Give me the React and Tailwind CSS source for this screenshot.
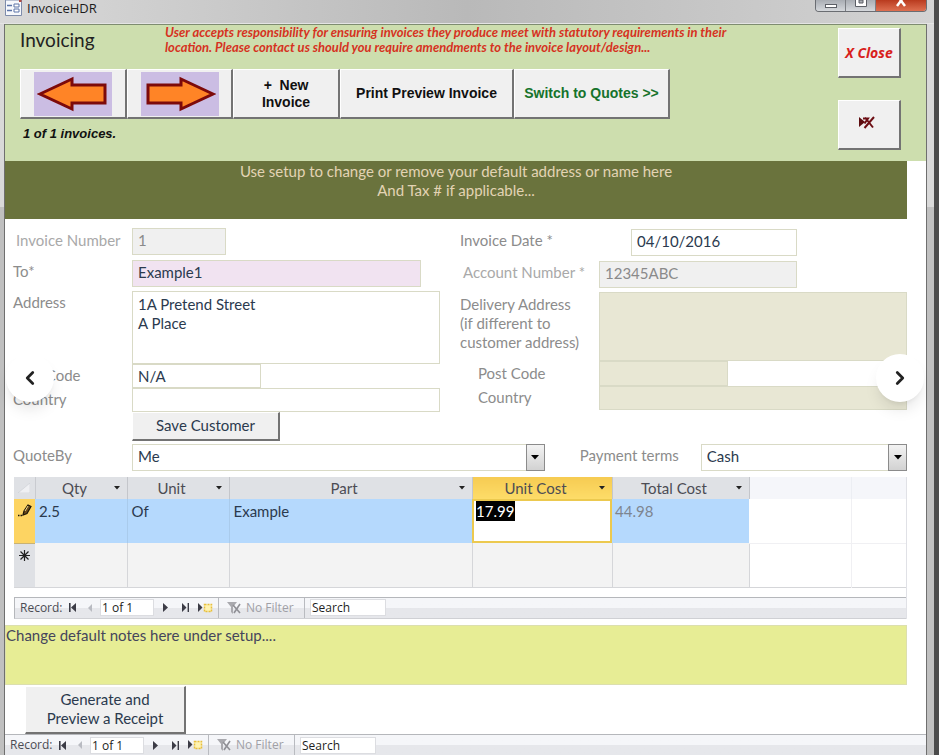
import { useState } from 'react';
import { ChevronLeft, ChevronRight } from 'lucide-react';

const COLUMNS = [
  { key: 'qty', label: 'Qty' },
  { key: 'unit', label: 'Unit' },
  { key: 'part', label: 'Part' },
  { key: 'cost', label: 'Unit Cost', active: true },
  { key: 'total', label: 'Total Cost' },
];

const FIELD = 'block border border-[#d9dac6] px-[5px] text-[#2b3a4e] outline-none';
const TEXTBOX = `${FIELD} pb-[3px]`;
const RAISED = 'bg-[#f0f0f0] border-t border-l border-white border-b-2 border-r-2 border-b-[#737373] border-r-[#737373]';

function Row({ id, label, className = '', labelClass = '', children }) {
  return (
    <div className={`flex ${className}`}>
      <label htmlFor={id} className={`shrink-0 text-[#8c8c8c] ${labelClass}`}>{label}</label>
      {children}
    </div>
  );
}

function Combo({ id, value, className = '' }) {
  return (
    <div className={`relative h-[27px] ${className}`}>
      <select id={id} defaultValue={value} className={`${TEXTBOX} h-full w-full appearance-none bg-white`}>
        <option>{value}</option>
      </select>
      <span className="pointer-events-none absolute inset-y-0 right-0 flex w-[19px] items-center justify-center border border-[#8b8b8b] bg-linear-to-b from-[#f3f3f3] to-[#d2d2d2]">
        <svg width="8" height="5" viewBox="0 0 8 5"><path d="M0 0h8L4 4.5z" /></svg>
      </span>
    </div>
  );
}

function ArrowImage({ flip }) {
  return (
    <span className="flex h-11 w-[78px] items-center justify-center bg-[#cbbde3]">
      <svg width="72" height="38" viewBox="0 0 72 38" className={flip ? '-scale-x-100' : ''}>
        <path d="M3 19 35 4v6h33v18H35v6z" fill="#ff8426" stroke="#7d0a0a" strokeWidth="3" />
      </svg>
    </span>
  );
}

function RecordNav({ id, className = '' }) {
  return (
    <div className={`flex h-[22px] items-center border-t border-[#b5b7bb] bg-linear-to-b from-[#f5f6f9] from-50% to-[#e6e7eb] to-50% font-['Open_Sans',sans-serif] text-[12px] leading-4 text-[#4c4c54] ${className}`}>
      <span className="w-12">Record:</span>
      <button aria-label="First record" className="w-5">
        <svg width="9" height="9" viewBox="0 0 9 9" fill="#3c3c46"><path d="M1 0h1.6v9H1zM8 0v9L3 4.5z" /></svg>
      </button>
      <button aria-label="Previous record" className="w-3">
        <svg width="5" height="8" viewBox="0 0 5 8" fill="#b9bbc2"><path d="M4 0v8L0 4z" /></svg>
      </button>
      <input id={`${id}-pos`} aria-label="Current record" defaultValue="1 of 1" className="h-[17px] w-[54px] border border-[#dcdde1] bg-white px-px text-[#1e1e22] outline-none" />
      <button aria-label="Next record" className="ml-[9px] w-[19px]">
        <svg width="6" height="9" viewBox="0 0 6 9" fill="#3c3c46"><path d="M0 0v9l5-4.5z" /></svg>
      </button>
      <button aria-label="Last record" className="w-4">
        <svg width="9" height="9" viewBox="0 0 9 9" fill="#3c3c46"><path d="M0 0v9l4.5-4.5zM5.6 0h1.4v9H5.6z" /></svg>
      </button>
      <button aria-label="New record" className="w-4">
        <svg width="15" height="10" viewBox="0 0 15 10">
          <path d="M0 0v9l4.500-4.500z" fill="#3c3c46" />
          <path d="M6.500 1.500h7v7h-7z" fill="#fff3b0" stroke="#e8bf3c" strokeWidth="1.500" strokeDasharray="2 1" />
        </svg>
      </button>
      <button className="ml-1 flex h-full w-[87px] items-center gap-1 border-x border-[#b9bbc0] pl-2 text-[#a0a0a6]">
        <svg width="15" height="14" viewBox="0 0 15 14">
          <path d="M0 1h10L6 6v7L4 11V6z" fill="#a9a9ae" />
          <path d="m6 4 7 8M13 3 7 12" stroke="#8f8f95" strokeWidth="1.600" />
        </svg>
        No Filter
      </button>
      <input id={`${id}-search`} aria-label="Search" defaultValue="Search" className="ml-[5px] h-[17px] w-[76px] border border-[#dcdde1] bg-white px-px text-[#1e1e22] outline-none" />
    </div>
  );
}

function TitleBar() {
  return (
    <div className="flex h-6 items-start justify-between border-b border-[#e4e4e4] bg-linear-to-r from-[#d9d9d9] via-[#b9b9b9] to-[#d3d3d3] pr-[7px] pl-[5px] font-['Open_Sans',sans-serif] text-[13px] text-[#1c1c1c]">
      <div className="flex items-center gap-[5px]">
        <svg width="17" height="16" viewBox="0 0 17 16">
          <path d="M.5 0h16v15.500H.5z" fill="#f6f8fc" stroke="#7e8cab" />
          <path d="M14 0h2.500v2H14z" fill="#b3493f" />
          <path d="M2 5.500h5M2 10.500h5" stroke="#5c74a8" strokeWidth="1.500" />
          <path d="M9 4h5v3H9zM9 9h5v3H9z" fill="#fff" stroke="#5c74a8" />
        </svg>
        <span className="leading-4">InvoiceHDR</span>
      </div>
      <div className="flex h-3 overflow-hidden rounded-b-[4px] border border-t-0 border-[#6a6d72]">
        <button aria-label="Minimise" className="flex w-[30px] items-center justify-center border-r border-[#7c7f84] bg-linear-to-b from-[#a9adb3] to-[#d5d8dc]">
          <span className="h-1 w-3 border border-[#5c5f66] bg-white" />
        </button>
        <button aria-label="Maximise" className="flex w-[30px] items-start justify-center border-r border-[#7c7f84] bg-linear-to-b from-[#a9adb3] to-[#d5d8dc]">
          <svg width="12" height="8" viewBox="0 0 12 8">
            <path d="M.5-1v7.500h11V-1" fill="#fff" stroke="#5c5f66" />
            <path d="M4 0h4v3H4z" fill="#a9adb3" stroke="#5c5f66" />
          </svg>
        </button>
        <button aria-label="Close window" className="flex w-[50px] items-start justify-center bg-linear-to-b from-[#b93a1e] to-[#de6f50]">
          <svg width="14" height="8" viewBox="0 0 14 8"><path d="m3 6 6-8M11 6 5-2" stroke="#fff" strokeWidth="2.500" /></svg>
        </button>
      </div>
    </div>
  );
}

function Header() {
  return (
    <header className="flex h-[137px] border-t border-[#7e8c70] bg-[#cddeae]">
      <div className="min-w-0 flex-1 pl-[15px]">
        <div className="flex h-[44px]">
          <h1 className="w-[145px] shrink-0 text-[19px] leading-[30px] text-[#222]">Invoicing</h1>
          <p className="max-w-[580px] text-[13px] leading-[15px] font-bold text-[#d6321f] italic">
            User accepts responsibility for ensuring invoices they produce meet with statutory requirements in their location. Please contact us should you require amendments to the invoice layout/design...
          </p>
        </div>
        <div className="flex h-[50px] font-['Liberation_Sans',sans-serif] text-[14px] leading-[17px] font-bold text-[#111]">
          <button aria-label="Previous invoice" className={`flex w-[107px] items-center justify-center ${RAISED}`}><ArrowImage /></button>
          <button aria-label="Next invoice" className={`flex w-[106px] items-center justify-center ${RAISED}`}><ArrowImage flip /></button>
          <button className={`w-[107px] whitespace-pre ${RAISED}`}>{'+  New\nInvoice'}</button>
          <button className={`w-[174px] ${RAISED}`}>Print Preview Invoice</button>
          <button className={`w-[156px] text-[#15732b] ${RAISED}`}>Switch to Quotes &gt;&gt;</button>
        </div>
        <p className="pt-[7px] pl-[3px] font-['Liberation_Sans',sans-serif] text-[13px] leading-4 font-bold text-[#111] italic">1 of 1 invoices.</p>
      </div>
      <div className="mr-[25px] flex w-[63px] flex-col gap-[22px] pt-[3px]">
        <button className={`h-[50px] font-['Open_Sans',sans-serif] text-[14px] font-bold text-[#d8201c] italic ${RAISED}`}>X Close</button>
        <button aria-label="Delete invoice" className={`flex h-[50px] items-center justify-center pr-1 pb-1 ${RAISED}`}>
          <svg width="16" height="13" viewBox="0 0 16 13">
            <path d="M0 1v10l6-5z" fill="#5d0d10" />
            <path d="M4 2.500h5L5.500 7.500M6 1.500l8 10M15 1 5.500 12" fill="none" stroke="#6d0e14" strokeWidth="2" />
          </svg>
        </button>
      </div>
    </header>
  );
}

function CustomerForm() {
  return (
    <div className="grid grid-cols-[435fr_447fr] gap-x-5">
      <div className="flex flex-col pt-[9px]">
        <Row id="number" label="Invoice Number" className="mb-[5px]" labelClass="w-[127px] pl-[11px] pt-[3px] text-[#a9a9a9]!">
          <input id="number" defaultValue="1" className={`${TEXTBOX} h-[27px] w-[94px] bg-[#f0f0f0] text-[#8a8a8a]!`} />
        </Row>
        <Row id="to" label="To*" className="mb-1" labelClass="w-[127px] pl-2 pt-[2px]">
          <input id="to" defaultValue="Example1" className={`${TEXTBOX} h-[27px] w-[289px] bg-[#f1e3f1]`} />
        </Row>
        <Row id="address" label="Address" labelClass="w-[127px] pl-2 pt-[2px]">
          <textarea id="address" defaultValue={'1A Pretend Street\nA Place'} className={`${FIELD} h-[73px] min-w-0 flex-1 resize-none bg-white pt-[3px]`} />
        </Row>
        <Row id="postcode" label="Post Code" labelClass="w-[127px] pl-2 pt-[2px]">
          <input id="postcode" defaultValue="N/A" className={`${FIELD} h-6 w-[129px] bg-white`} />
        </Row>
        <Row id="country" label="Country" labelClass="w-[127px] pl-2 pt-[2px]">
          <input id="country" className={`${FIELD} h-6 min-w-0 flex-1 bg-white`} />
        </Row>
        <button className={`ml-[127px] h-[29px] w-[148px] pb-[2px] text-[#2b3a4e] ${RAISED}`}>Save Customer</button>
      </div>

      <div className="flex flex-col pt-[10px]">
        <Row id="date" label="Invoice Date *" className="mb-[5px]" labelClass="w-[171px] pt-[2px]">
          <input id="date" defaultValue="04/10/2016" className={`${TEXTBOX} h-[27px] w-[166px] bg-white`} />
        </Row>
        <Row id="account" label="Account Number *" className="mb-1" labelClass="w-[139px] pl-[3px] pt-[2px] text-[#a9a9a9]!">
          <input id="account" defaultValue="12345ABC" className={`${TEXTBOX} h-[27px] w-[198px] bg-[#f0f0f0] text-[#8a8a8a]!`} />
        </Row>
        <Row id="delivery" label="Delivery Address (if different to customer address)" labelClass="w-[139px] h-[69px] pr-3 pt-[3px]">
          <textarea id="delivery" className={`${FIELD} h-[69px] min-w-0 flex-1 resize-none bg-[#e8e7d4]`} />
        </Row>
        <Row id="delivery-postcode" label="Post Code" labelClass="w-[139px] pl-[18px] pt-[3px]">
          <input id="delivery-postcode" className={`${FIELD} h-[25px] w-[129px] bg-[#e8e7d4]`} />
        </Row>
        <Row id="delivery-country" label="Country" labelClass="w-[139px] pl-[18px] pt-[2px]">
          <input id="delivery-country" className={`${FIELD} h-6 min-w-0 flex-1 bg-[#e8e7d4]`} />
        </Row>
      </div>
    </div>
  );
}

function LineItems() {
  const [cost, setCost] = useState('17.99');

  return (
    <div className="mt-1.5 ml-[9px] border-r border-[#e0e1e6]">
      <table className="w-full table-fixed border-collapse bg-white">
        <colgroup>
          <col className="w-[21px]" />
          <col className="w-[92px]" />
          <col className="w-[102px]" />
          <col className="w-[243px]" />
          <col className="w-[140px]" />
          <col className="w-[137px]" />
          <col className="w-[102px]" />
          <col />
        </colgroup>
        <thead>
          <tr className="h-[22px] bg-[#dfe1e5] text-[#4c4c54]">
            <th aria-label="Select all" className="border-r border-[#c9cbd0]">
              <svg width="12" height="10" viewBox="0 0 12 10" className="mx-auto"><path d="M12 0v10H0z" fill="#eff0f3" stroke="#c7c9ce" strokeWidth=".5" /></svg>
            </th>
            {COLUMNS.map(col => (
              <th key={col.key} className={`border-r border-[#c4c6cb] p-0 font-normal ${col.active ? 'bg-linear-to-b from-[#f6cb52] to-[#fddc68]' : ''}`}>
                <div className="flex items-center pr-[7px]">
                  <span className="flex-1 text-center">{col.label}</span>
                  <svg width="6" height="4" viewBox="0 0 6 4"><path d="M0 0h6L3 3.500z" fill="#222" /></svg>
                </div>
              </th>
            ))}
            <td className="border-r border-[#eceef3] bg-[#f5f6fa]" />
            <td className="bg-[#f5f6fa]" />
          </tr>
        </thead>
        <tbody>
          <tr className="h-11 bg-[#b5d9fd] align-top text-[#2b3a4e]">
            <td className="border-b border-[#c9b273] bg-[#fdd462] p-0 pt-1">
              <svg width="15" height="15" viewBox="0 0 15 15" className="mx-auto">
                <path d="m6 12 1-4 4-6 3 1.500-4 7z" fill="#6a4a1c" stroke="#1d1608" strokeWidth="1.200" />
                <path d="m8 8 3-5" stroke="#f5d98f" />
                <path d="M1 12.500h1.500M3.500 12.500H5" stroke="#1d1608" strokeWidth="1.500" />
              </svg>
            </td>
            <td className="border-r border-[#a9cbec] p-0 pt-[3px] pl-1">2.5</td>
            <td className="border-r border-[#a9cbec] p-0 pt-[3px] pl-1">Of</td>
            <td className="p-0 pt-[3px] pl-1">Example</td>
            <td className="p-0">
              <div className="h-11 border-2 border-[#ecc94f] bg-white pl-[2px]">
                <input aria-label="Unit cost" value={cost} onChange={e => setCost(e.target.value)} className="block h-5 w-[39px] bg-black text-white outline-none" />
              </div>
            </td>
            <td className="p-0 pt-[3px] pl-[3px] text-[#7d8590]">44.98</td>
            <td className="border-r border-b border-[#f0f0f3] bg-white" />
            <td className="border-b border-[#f0f0f3] bg-white" />
          </tr>
          <tr className="h-11 border-b border-[#d5d6d9] bg-[#f3f3f3] align-top">
            <td className="bg-[#dfe1e5] p-0 pt-1.5">
              <svg width="11" height="11" viewBox="0 0 11 11" className="mx-auto"><path d="M5.500 0v11M0 5.500h11M1.500 1.500l8 8M9.500 1.500l-8 8" stroke="#222" strokeWidth="1.200" /></svg>
            </td>
            {COLUMNS.map(col => <td key={col.key} className="border-r border-[#d5d6d9]" />)}
            <td className="border-r border-[#f0f0f3] bg-white" />
            <td className="bg-white" />
          </tr>
        </tbody>
      </table>
      <RecordNav id="items" className="mt-[9px] border-b border-l border-b-[#cfd0d4] pl-[5px]" />
    </div>
  );
}

export default function App() {
  return (
    <div className="flex min-h-screen bg-[#4b4b4b] font-['Lato',sans-serif] text-[15px] leading-[19px]">
      <div className="mr-[5px] flex flex-1 flex-col bg-linear-to-b from-[#d9d9d9] from-[207px] to-[#c0c0c0] to-[207px]">
        <TitleBar />
        <div className="mr-[7px] ml-1 flex flex-1 flex-col border-x border-[#6f6f6f] bg-white">
          <Header />
          <main className="flex flex-1 flex-col pr-[19px]">
            <div className="h-[58px] bg-[#6a733d] px-4 pt-px text-center text-[#e3d3b4]">
              <p>Use setup to change or remove your default address or name here</p>
              <p>And Tax # if applicable...</p>
            </div>
            <CustomerForm />
            <div className="mt-[3px] flex">
              <label htmlFor="quote-by" className="w-[127px] shrink-0 pt-[2px] pl-2 text-[#8c8c8c]">QuoteBy</label>
              <Combo id="quote-by" value="Me" className="min-w-0 flex-[412]" />
              <label htmlFor="terms" className="w-[156px] shrink-0 pt-[2px] pl-[35px] text-[#8c8c8c]">Payment terms</label>
              <Combo id="terms" value="Cash" className="min-w-0 flex-[206]" />
            </div>
            <LineItems />
            <textarea aria-label="Notes" defaultValue="Change default notes here under setup...." className="mt-1.5 block h-[60px] w-full resize-none border border-[#dcdfae] bg-[#e7ed95] text-[#45455c] outline-none" />
            <button className={`mt-px ml-5 h-[48px] w-[161px] text-[#2b3a4e] ${RAISED}`}>Generate and<br />Preview a Receipt</button>
          </main>
          <RecordNav id="invoices" className="pl-[5px]" />
        </div>
      </div>

      <button aria-label="Previous image" className="fixed top-1/2 left-[6px] flex size-12 -translate-y-1/2 items-center justify-center rounded-full bg-white shadow-lg">
        <ChevronLeft size={22} strokeWidth={3} color="#222" />
      </button>
      <button aria-label="Next image" className="fixed top-1/2 right-[15px] flex size-12 -translate-y-1/2 items-center justify-center rounded-full bg-white shadow-lg">
        <ChevronRight size={22} strokeWidth={3} color="#222" />
      </button>
    </div>
  );
}
